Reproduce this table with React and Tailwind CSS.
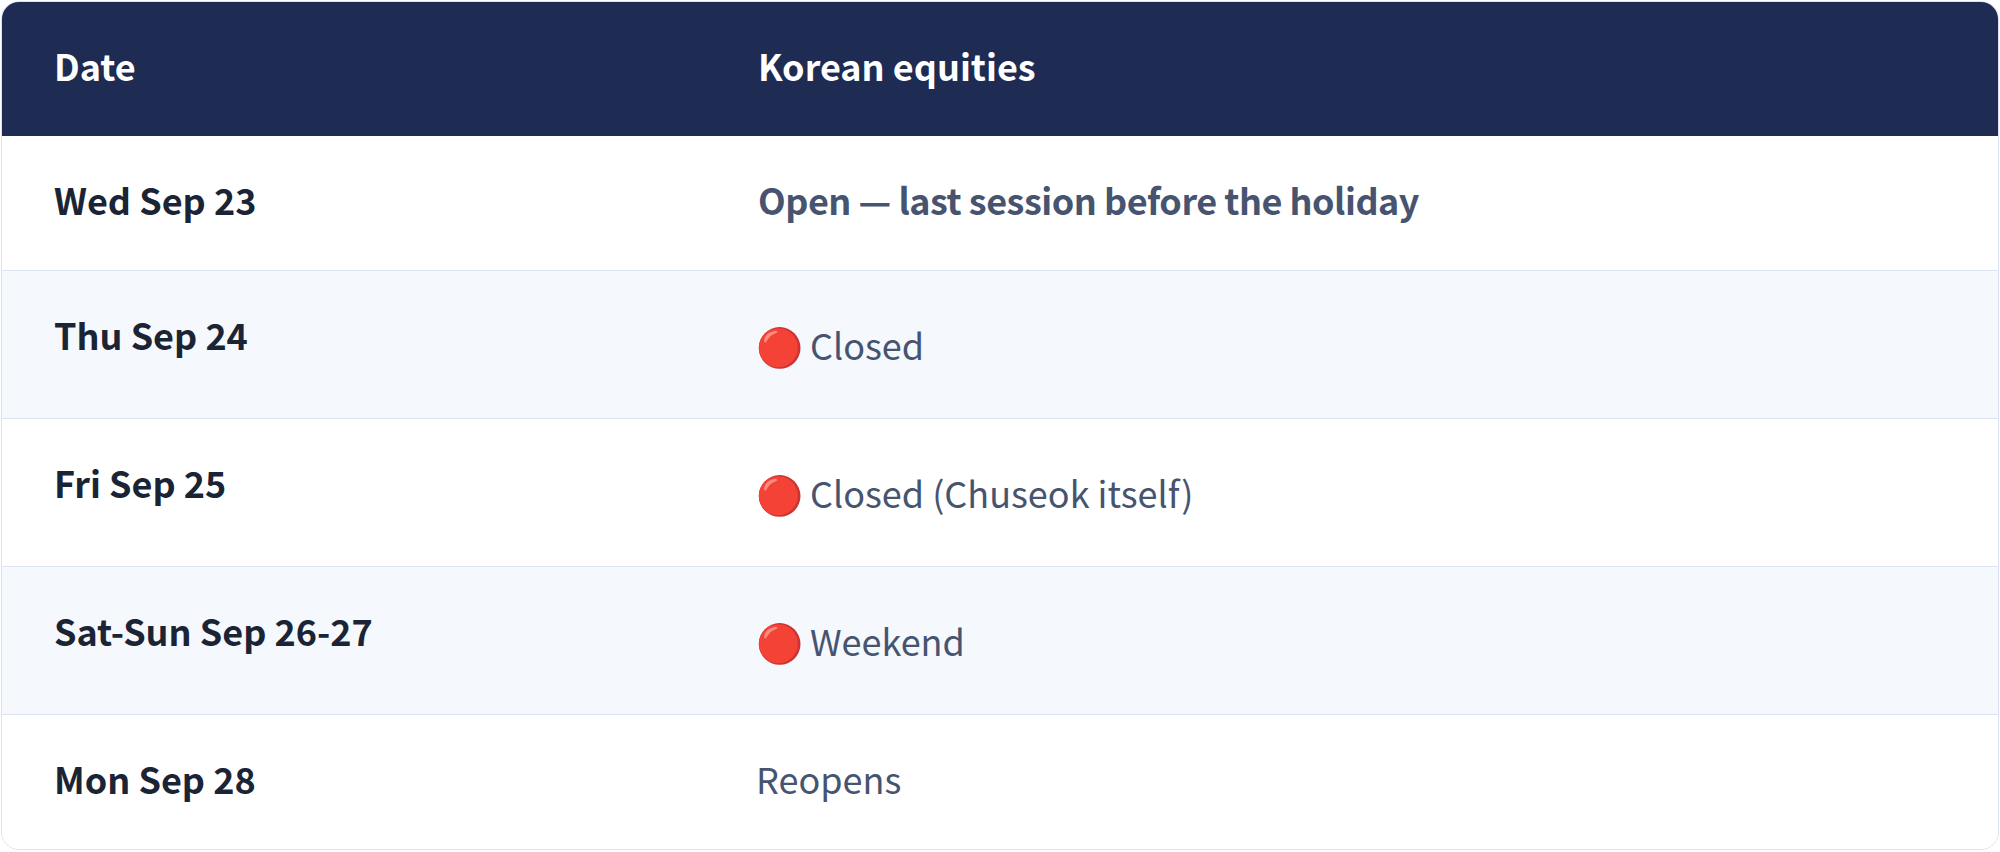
import React from "react";

const rows = [
  { date: "Wed Sep 23", status: "Open — last session before the holiday", strong: true },
  { date: "Thu Sep 24", status: "Closed", closed: true },
  { date: "Fri Sep 25", status: "Closed (Chuseok itself)", closed: true },
  { date: "Sat-Sun Sep 26-27", status: "Weekend", closed: true },
  { date: "Mon Sep 28", status: "Reopens" },
];

const App = () => {
  return (
    <div
      className="w-[2000px] h-[852px] bg-white p-px"
      style={{ fontFamily: '"Noto Sans CJK KR", "Noto Sans", sans-serif' }}
    >
      <div className="rounded-[18px] border border-[#dce3f0] overflow-hidden">
        <table className="w-full border-collapse text-[36px]">
          <thead>
            <tr className="bg-[#1e2b53] text-white">
              <th className="w-[704px] text-left font-bold pl-[52px] pr-[40px] pt-[36px] pb-[44px] leading-[54px] align-top">
                Date
              </th>
              <th className="text-left font-bold pl-[52px] pr-[40px] pt-[36px] pb-[44px] leading-[54px] align-top">
                Korean equities
              </th>
            </tr>
          </thead>
          <tbody>
            {rows.map((row, i) => (
              <tr
                key={row.date}
                className={`${i % 2 === 1 ? "bg-[#f5f8fd]" : "bg-white"} ${
                  i < rows.length - 1 ? "border-b border-[#dde4f1]" : ""
                }`}
              >
                <td className="pl-[52px] pr-[40px] pt-[36px] pb-[44px] leading-[54px] align-top font-bold text-[#1b2435]">
                  {row.date}
                </td>
                <td
                  className={`pl-[50px] pr-[40px] leading-[54px] align-top text-[#475470] ${
                    row.strong ? "pl-[52px] font-semibold tracking-[-0.5px]" : "font-normal"
                  } ${row.closed ? "pt-[40px] pb-[40px]" : "pt-[36px] pb-[44px]"}`}
                >
                  {row.closed ? (
                    <span className="inline-flex items-center gap-[7px] leading-[67px]">
                      <span className="text-[38px]">🔴</span>
                      <span>{row.status}</span>
                    </span>
                  ) : (
                    row.status
                  )}
                </td>
              </tr>
            ))}
          </tbody>
        </table>
      </div>
    </div>
  );
};

export default App;
